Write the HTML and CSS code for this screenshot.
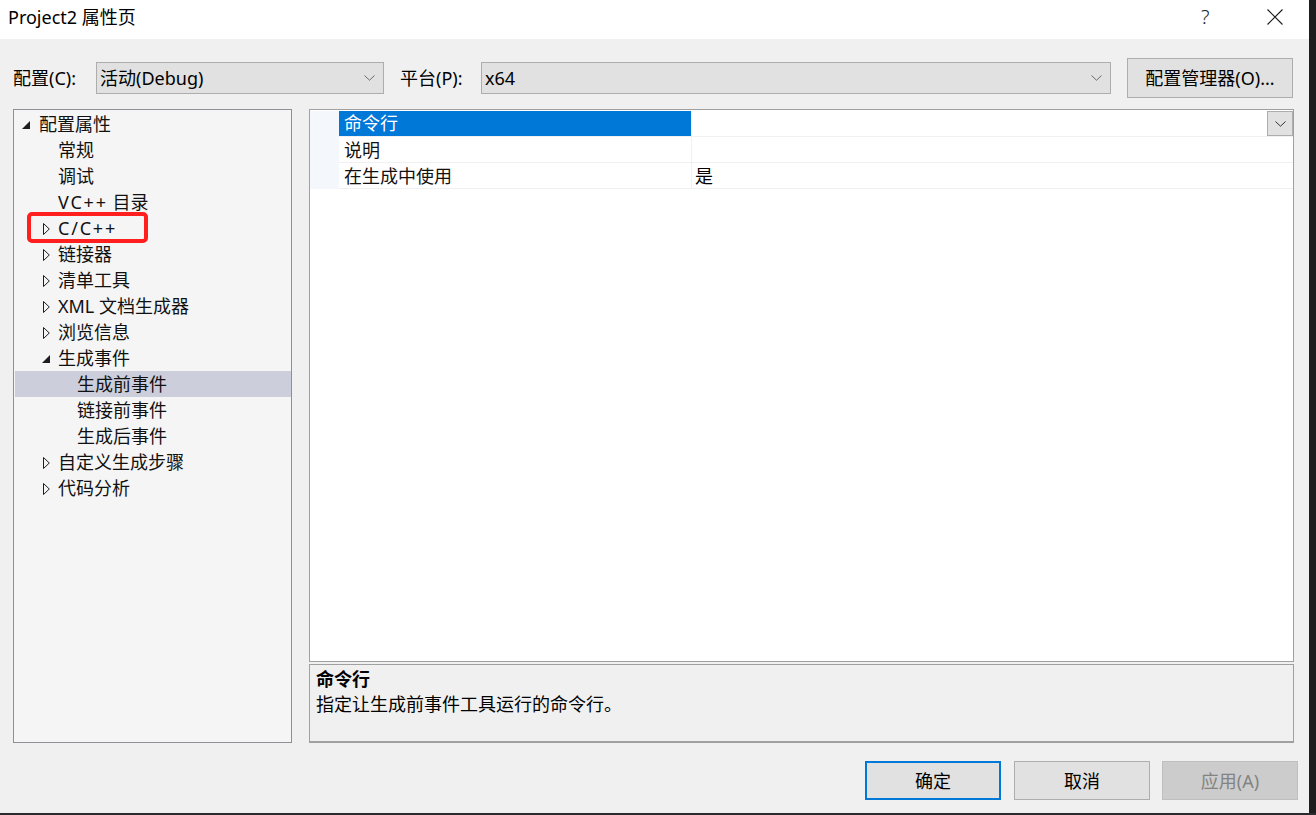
FILE: index.html
```html
<!DOCTYPE html>
<html lang="zh-CN">
<head>
<meta charset="utf-8">
<title>Project2 属性页</title>
<link rel="stylesheet" href="styles.css">
</head>
<body>
<div class="screen">
  <div class="dialog">
    <div class="titlebar">
      <span class="title">Project2 属性页</span>
      <span class="help">?</span>
      <svg class="close" width="16" height="16" viewBox="0 0 16 16"><path d="M0.5 0.5 L15.5 15.5 M15.5 0.5 L0.5 15.5" stroke="#1a1a1a" stroke-width="1.1" fill="none"/></svg>
    </div>

    <div class="toolbar">
      <span class="lbl">配置(C):</span>
      <div class="combo combo-config">
        <span>活动(Debug)</span>
        <svg class="chev" width="11" height="6" viewBox="0 0 11 6"><polyline points="0.5,0.5 5.5,5.2 10.5,0.5" stroke="#6a6a6a" stroke-width="1" fill="none"/></svg>
      </div>
      <span class="lbl lbl-platform">平台(P):</span>
      <div class="combo combo-platform">
        <span>x64</span>
        <svg class="chev" width="11" height="6" viewBox="0 0 11 6"><polyline points="0.5,0.5 5.5,5.2 10.5,0.5" stroke="#6a6a6a" stroke-width="1" fill="none"/></svg>
      </div>
      <button class="btn btn-manager">配置管理器(O)...</button>
    </div>

    <div class="main">
      <div class="tree">
        <div class="node l0"><span class="exp"><svg class="tri-open" width="8" height="8" viewBox="0 0 8 8"><polygon points="8,0 8,8 0,8" fill="#1e1e1e"/></svg></span>配置属性</div>
        <div class="node l1"><span class="exp"></span>常规</div>
        <div class="node l1"><span class="exp"></span>调试</div>
        <div class="node l1"><span class="exp"></span><span class="wide">VC++</span>&nbsp;目录</div>
        <div class="node l1"><span class="exp"><svg class="tri-closed" width="7" height="12" viewBox="0 0 7 12"><polygon points="0.5,0.5 6.3,6 0.5,11.5" fill="none" stroke="#1e1e1e" stroke-width="1"/></svg></span><span class="wide">C/C++</span><span class="mark"></span></div>
        <div class="node l1"><span class="exp"><svg class="tri-closed" width="7" height="12" viewBox="0 0 7 12"><polygon points="0.5,0.5 6.3,6 0.5,11.5" fill="none" stroke="#1e1e1e" stroke-width="1"/></svg></span>链接器</div>
        <div class="node l1"><span class="exp"><svg class="tri-closed" width="7" height="12" viewBox="0 0 7 12"><polygon points="0.5,0.5 6.3,6 0.5,11.5" fill="none" stroke="#1e1e1e" stroke-width="1"/></svg></span>清单工具</div>
        <div class="node l1"><span class="exp"><svg class="tri-closed" width="7" height="12" viewBox="0 0 7 12"><polygon points="0.5,0.5 6.3,6 0.5,11.5" fill="none" stroke="#1e1e1e" stroke-width="1"/></svg></span>XML 文档生成器</div>
        <div class="node l1"><span class="exp"><svg class="tri-closed" width="7" height="12" viewBox="0 0 7 12"><polygon points="0.5,0.5 6.3,6 0.5,11.5" fill="none" stroke="#1e1e1e" stroke-width="1"/></svg></span>浏览信息</div>
        <div class="node l1"><span class="exp"><svg class="tri-open tri-open-l1" width="8" height="8" viewBox="0 0 8 8"><polygon points="8,0 8,8 0,8" fill="#1e1e1e"/></svg></span>生成事件</div>
        <div class="node l2 selected">生成前事件</div>
        <div class="node l2">链接前事件</div>
        <div class="node l2">生成后事件</div>
        <div class="node l1"><span class="exp"><svg class="tri-closed" width="7" height="12" viewBox="0 0 7 12"><polygon points="0.5,0.5 6.3,6 0.5,11.5" fill="none" stroke="#1e1e1e" stroke-width="1"/></svg></span>自定义生成步骤</div>
        <div class="node l1"><span class="exp"><svg class="tri-closed" width="7" height="12" viewBox="0 0 7 12"><polygon points="0.5,0.5 6.3,6 0.5,11.5" fill="none" stroke="#1e1e1e" stroke-width="1"/></svg></span>代码分析</div>
      </div>

      <div class="right">
        <div class="grid">
          <div class="prow">
            <span class="gutter"></span>
            <span class="pname active">命令行</span>
            <span class="pval"><span></span><span class="dd"><svg width="11" height="6" viewBox="0 0 11 6"><polyline points="0.5,0.5 5.5,5.2 10.5,0.5" stroke="#333" stroke-width="1" fill="none"/></svg></span></span>
          </div>
          <div class="prow low">
            <span class="gutter"></span>
            <span class="pname">说明</span>
            <span class="pval"></span>
          </div>
          <div class="prow low">
            <span class="gutter"></span>
            <span class="pname">在生成中使用</span>
            <span class="pval">是</span>
          </div>
        </div>
        <div class="desc">
          <div class="desc-title">命令行</div>
          <div class="desc-text">指定让生成前事件工具运行的命令行。</div>
        </div>
      </div>
    </div>

    <div class="footer">
      <button class="btn btn-ok">确定</button>
      <button class="btn btn-cancel">取消</button>
      <button class="btn btn-apply">应用(A)</button>
    </div>
  </div>
  <div class="side"></div>
</div>
</body>
</html>
```

FILE: styles.css
```css
* { box-sizing: border-box; }

html, body {
  margin: 0;
  padding: 0;
}

body {
  width: 1316px;
  height: 815px;
  overflow: hidden;
  background: #2b2b2e;
  font-family: "Noto Sans", "Noto Sans CJK SC", sans-serif;
  font-size: 18px;
  color: #000;
}

.screen {
  display: flex;
  height: 813px;
}

.side {
  flex: 1;
  background: #1e1e1e;
}

.dialog {
  width: 1309px;
  height: 813px;
  background: #f0f0f0;
  display: flex;
  flex-direction: column;
}

/* title bar */
.titlebar {
  height: 39px;
  background: #fff;
  display: flex;
  align-items: center;
  padding-bottom: 6px;
}

.title {
  flex: 1;
  padding-left: 8px;
  line-height: 24px;
  color: #000;
}

.help {
  width: 12px;
  margin-right: 54px;
  font-size: 20px;
  line-height: 24px;
  font-weight: 300;
  color: #222;
}

.close {
  margin-right: 26px;
}

/* toolbar */
.toolbar {
  display: flex;
  align-items: center;
  height: 40px;
  margin-top: 19px;
  padding-left: 13px;
}

.lbl {
  width: 83px;
  line-height: 26px;
}

.lbl-platform {
  width: 81px;
  margin-left: 16px;
}

.combo {
  height: 32px;
  border: 1px solid #adadad;
  background: #e1e1e1;
  display: flex;
  align-items: center;
  justify-content: space-between;
  padding-left: 3px;
  padding-right: 7px;
  line-height: 26px;
}

.combo-config { width: 288px; }
.combo-platform { width: 630px; }

.chev { margin-right: 1px; }

.btn {
  font-family: inherit;
  font-size: 18px;
  color: #000;
  background: #e1e1e1;
  border: 1px solid #adadad;
  padding: 0;
  line-height: 26px;
  margin: 0;
}

.btn-manager {
  width: 166px;
  height: 40px;
  margin-left: 16px;
}

/* main area */
.main {
  display: flex;
  gap: 17px;
  height: 634px;
  margin-top: 11px;
  padding-left: 13px;
}

.tree {
  width: 279px;
  height: 634px;
  border: 1px solid #8e8f98;
  background: #f5f5f5;
  padding: 1px 0 0 1px;
}

.node {
  position: relative;
  display: flex;
  align-items: center;
  height: 26px;
  line-height: 26px;
  white-space: nowrap;
  color: #111;
}

.wide {
  letter-spacing: 1.8px;
}

.l0 { padding-left: 5px; }
.l1 { padding-left: 24px; }
.l2 { padding-left: 62px; }

.exp {
  width: 19px;
  height: 26px;
  display: flex;
  align-items: center;
}

.tri-open { margin-left: 2px; margin-top: 1px; }
.tri-open-l1 { margin-left: 3px; }
.tri-closed { margin-left: 4px; margin-top: 1px; }

.selected {
  background: #cccedb;
}

.mark {
  position: absolute;
  left: 12px;
  top: -3px;
  width: 121px;
  height: 31px;
  border: 4px solid #ff1f1f;
  border-radius: 5px;
}

.right {
  width: 985px;
  display: flex;
  flex-direction: column;
  gap: 2px;
}

.grid {
  height: 553px;
  border: 1px solid #a0a0a0;
  background: #fff;
  padding-top: 1px;
}

.prow {
  display: grid;
  grid-template-columns: 29px 352px 1fr;
  height: 26px;
}

.gutter {
  background: #f4f7fc;
}

.pname,
.pval {
  border-bottom: 1px solid #f0f0f0;
  line-height: 25px;
  height: 26px;
}

.low .pname,
.low .pval {
  padding-top: 2px;
  line-height: 23px;
}

.pname {
  padding-left: 5px;
  color: #111;
}

.pname.active {
  background: #0078d7;
  color: #fff;
}

.pval {
  border-left: 1px solid #f0f0f0;
  padding-left: 3px;
  display: flex;
  justify-content: space-between;
}

.dd {
  width: 26px;
  height: 25px;
  border: 1px solid #adadad;
  background: #e1e1e1;
  display: flex;
  align-items: center;
  justify-content: center;
}

.desc {
  height: 79px;
  border: 1px solid #a0a0a0;
  border-bottom: 2px solid #a0a0a0;
  background: #f0f0f0;
  padding: 2px 6px 0;
}

.desc-title {
  font-weight: 700;
  line-height: 25px;
}

.desc-text {
  line-height: 25px;
}

/* footer */
.footer {
  display: flex;
  justify-content: flex-end;
  margin-top: 18px;
  padding-right: 11px;
}

.footer .btn {
  width: 136px;
  height: 39px;
}

.btn-ok {
  border: 2px solid #0078d7;
}

.btn-cancel {
  margin-left: 13px;
}

.btn-apply {
  margin-left: 12px;
  background: #cccccc;
  border-color: #bfbfbf;
  color: #838383;
}
```
